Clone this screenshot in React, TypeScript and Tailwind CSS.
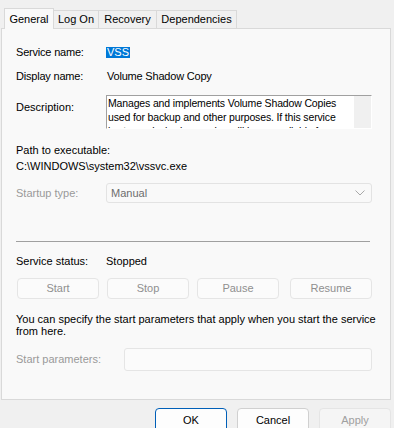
import React from 'react'

// Service properties dialog — "General" tab of the Volume Shadow Copy service.

const TABS = ['General', 'Log On', 'Recovery', 'Dependencies']
const TAB_WIDTHS = ['w-[50px]', 'w-[45px]', 'w-[58px]', 'w-[80px]']
const ACTIONS = [
  { label: 'Start', cls: 'w-[82px]' },
  { label: 'Stop', cls: 'w-[82px] ml-[8px]' },
  { label: 'Pause', cls: 'w-[82px] ml-[8px]' },
  { label: 'Resume', cls: 'w-[82px] ml-[11px]' },
]
// the edit control wraps at its own width; keep its line breaks as shown
const DESCRIPTION = [
  'Manages and implements Volume Shadow Copies',
  'used for backup and other purposes. If this service',
  'is stopped, shadow copies will be unavailable for',
  'backup and the backup may fail.',
]

function Tab({ label, active, width }: { label: string; active: boolean; width: string }) {
  if (active) {
    return (
      <div
        className={`${width} h-[21px] -mb-px relative z-10 flex items-start justify-center pt-[2px] bg-[#f9f9f9] border border-b-0 border-[#d9d9d9]`}
      >
        {label}
      </div>
    )
  }
  return (
    <div
      className={`${width} h-[18px] flex items-center justify-center bg-[#f0f0f0] border border-b-0 border-l-0 border-[#d9d9d9]`}
    >
      {label}
    </div>
  )
}

function Chevron() {
  return (
    <svg width="10" height="6" viewBox="0 0 10 6" className="mr-[6px]">
      <path d="M0.5 0.5 L5 5 L9.5 0.5" fill="none" stroke="#a8a8a8" strokeWidth="1" />
    </svg>
  )
}

export default function App() {
  return (
    <div className="w-[394px] h-[428px] overflow-hidden bg-[#f0f0f0] pt-[8px] text-[11px] text-black font-['Liberation_Sans',Arial,sans-serif]">
      <div className="flex items-end pl-[4px] h-[20px]">
        {TABS.map((t, i) => (
          <Tab key={t} label={t} active={i === 0} width={TAB_WIDTHS[i]} />
        ))}
      </div>

      <div className="ml-[1px] w-[390px] h-[372px] bg-[#f9f9f9] border border-[#d9d9d9] flex flex-col pl-[14px] pr-[17px] pt-[16px]">
        <div className="flex items-center h-[14px]">
          <span className="w-[90px] tracking-[-0.2px]">Service name:</span>
          <span className="bg-[#0078d7] text-white px-[1px] leading-[11px] h-[11px]">VSS</span>
        </div>

        <div className="flex items-center h-[14px] mt-[10px]">
          <span className="w-[91px] tracking-[-0.2px]">Display name:</span>
          <span className="tracking-[-0.2px]">Volume Shadow Copy</span>
        </div>

        <div className="flex mt-[12px]">
          <span className="w-[90px] pt-[5px] leading-[14px]">Description:</span>
          <div className="w-[266px] h-[34px] flex border-t border-l border-[#a0a0a0] border-r border-r-white border-b border-b-white bg-white">
            <div className="flex-1 min-w-0 overflow-hidden pl-[1px] leading-[14px] text-[10.5px] tracking-[-0.15px]">
              {DESCRIPTION.map((line) => (
                <div key={line} className="whitespace-nowrap">
                  {line}
                </div>
              ))}
            </div>
            <div className="w-[17px] shrink-0 bg-[#f0f0f0]" />
          </div>
        </div>

        <div className="mt-[13px] leading-[16px]">
          <div>Path to executable:</div>
          <div>C:\WINDOWS\system32\vssvc.exe</div>
        </div>

        <div className="flex items-center mt-[9px]">
          <span className="w-[90px] text-[#9a9a9a]">Startup type:</span>
          <div className="w-[266px] h-[20px] flex items-center justify-between pl-[4px] rounded-[3px] border border-[#e3e3e3] bg-[#f9f9f9] text-[#6d6d6d]">
            <span>Manual</span>
            <Chevron />
          </div>
        </div>

        <div className="mt-[38px] mr-[3px] h-px bg-[#a0a0a0]" />

        <div className="flex items-center h-[14px] mt-[12px]">
          <span className="w-[90px]">Service status:</span>
          <span>Stopped</span>
        </div>

        <div className="flex mt-[10px] pl-[1px]">
          {ACTIONS.map((a) => (
            <div
              key={a.label}
              className={`${a.cls} h-[21px] flex items-center justify-center rounded-[4px] border border-[#e5e5e5] bg-[#fbfbfb] text-[#8f8f8f]`}
            >
              {a.label}
            </div>
          ))}
        </div>

        <p className="mt-[14px] -mr-[12px] leading-[12px]">
          You can specify the start parameters that apply when you start the service from here.
        </p>

        <div className="flex items-center mt-[11px]">
          <span className="w-[108px] text-[#9a9a9a]">Start parameters:</span>
          <div className="w-[248px] h-[23px] rounded-[3px] border border-[#e5e5e5] bg-[#fbfbfb]" />
        </div>
      </div>

      <div className="flex justify-end pr-[3px] mt-[8px] gap-[10px]">
        <div className="w-[72px] h-[24px] flex items-center justify-center rounded-[4px] border border-[#005fb8] bg-[#fdfdfd]">
          OK
        </div>
        <div className="w-[72px] h-[24px] flex items-center justify-center rounded-[4px] border border-[#d0d0d0] bg-[#fdfdfd]">
          Cancel
        </div>
        <div className="w-[72px] h-[24px] flex items-center justify-center rounded-[4px] border border-[#e5e5e5] bg-[#f5f5f5] text-[#a0a0a0]">
          Apply
        </div>
      </div>
    </div>
  )
}
